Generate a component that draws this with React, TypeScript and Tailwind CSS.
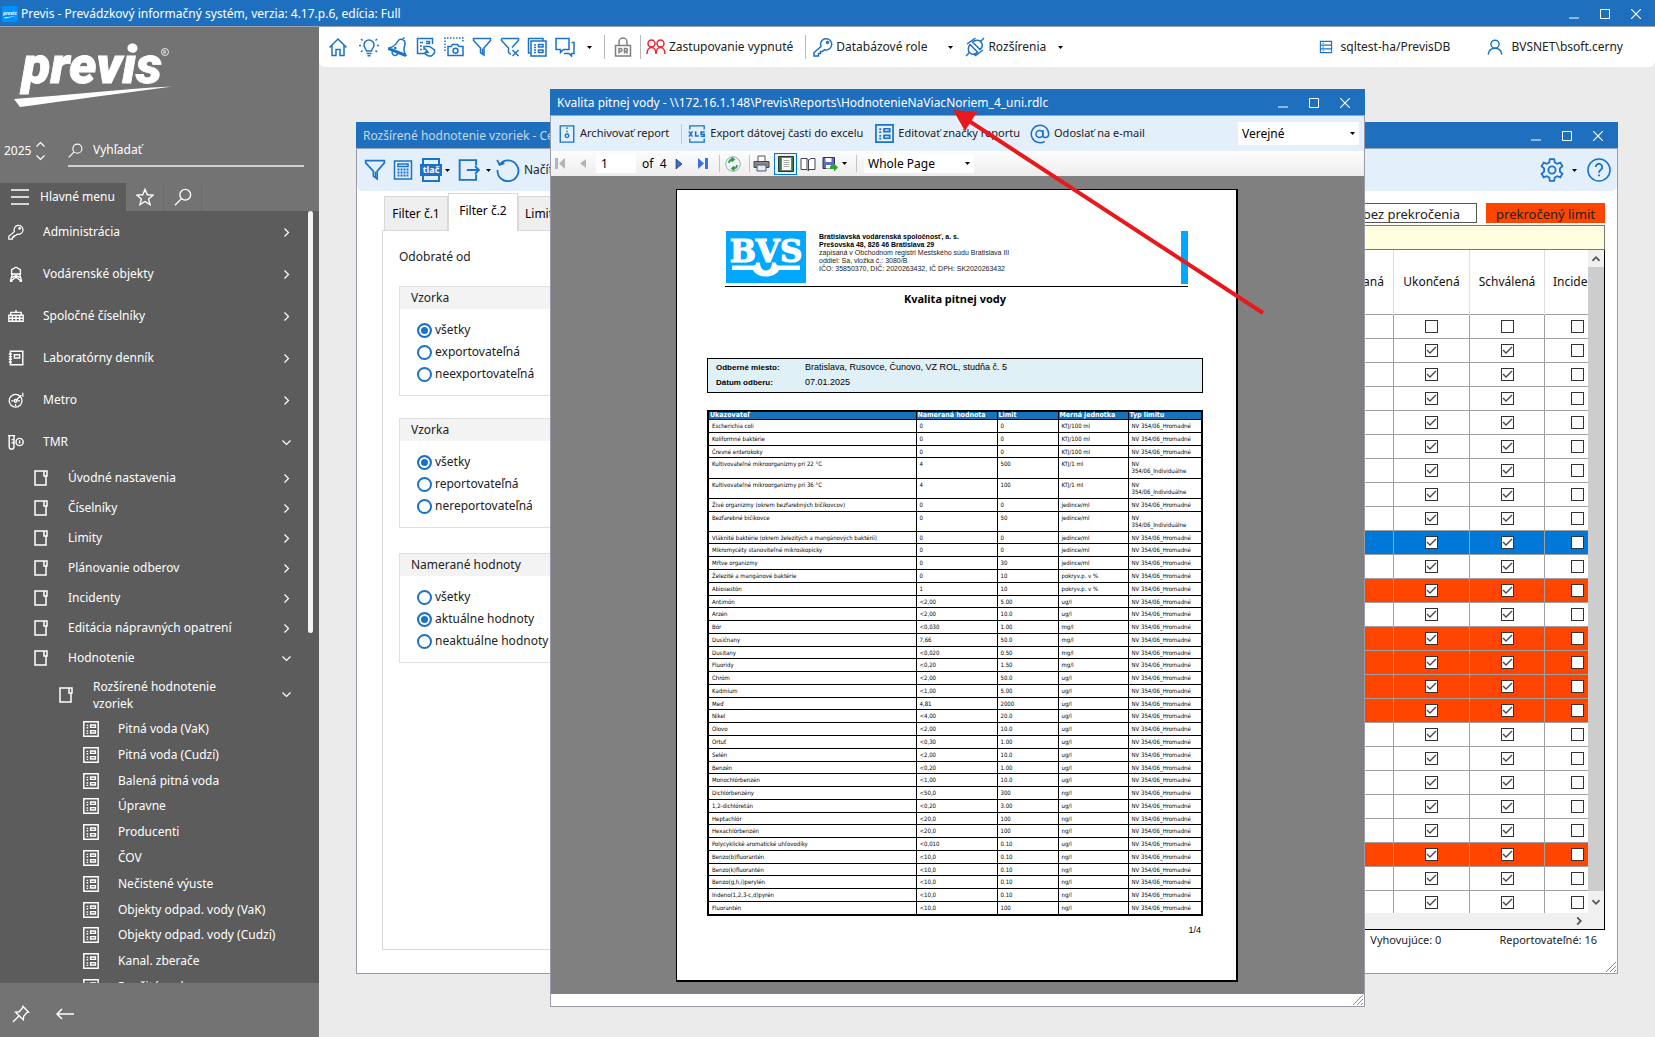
import { useState } from "react";
import type { ReactNode } from "react";

type IconProps = { className?: string };

function Icon({ className = "size-5", box = 20, width = 1.5, children }: IconProps & { box?: number; width?: number; children: ReactNode }) {
  return (
    <svg className={`shrink-0 ${className}`} viewBox={`0 0 ${box} ${box}`} fill="none" stroke="currentColor" strokeWidth={width} aria-hidden="true">
      {children}
    </svg>
  );
}

/* ---------- icons ---------- */

const HomeIcon = ({ className }: IconProps) => (
  <Icon className={className}>
    <path d="M1.500 10.500 10 2l8.500 8.500M4 8.500V18.500h4v-6h4v6h4V8.500" />
  </Icon>
);

const BulbIcon = ({ className }: IconProps) => (
  <Icon className={className}>
    <path d="M7.500 14c0-2-2.500-3-2.500-6a5 5 0 0 1 10 0c0 3-2.500 4-2.500 6zM7.500 16.500h5M8.500 18.800h3" />
    <path d="M0 8.500h2M18 8.500h2M2 2l1.500 1.500M18 2l-1.500 1.500M2 15l1.500-1.500M18 15l-1.500-1.500" />
  </Icon>
);

const BellIcon = ({ className }: IconProps) => (
  <Icon className={className}>
    <path d="M1 11c5-1 7-3.500 9-7 1.500-2.500 5-2.500 6.500 0 1.500 2.800-.5 5.500-.5 8.500 0 2 .5 3.500 1.500 5zM14.500 2.500 16.500.500M1 11l-.3 1.500L17 19l.5-1.500" />
    <path d="M4.500 14a3 3 0 1 0 5.500 2.300" />
    <circle cx="7.300" cy="11" r="0.600" />
  </Icon>
);

const FormHandIcon = ({ className }: IconProps) => (
  <Icon className={className}>
    <path d="M8 16.500H1.500V1.500h15V7M4 5.500h3M4 9h2M4 12.500h2M10 4.500h3.500v2H10" />
    <path d="M8 9.500h5.500l5 3.500v3l-3 3h-3l-4-2.500 1-1.500 2.500.5-2.500-3.500H8z" />
  </Icon>
);

const CameraIcon = ({ className }: IconProps) => (
  <Icon className={className}>
    <path d="M1 14V1h18v5" strokeDasharray="1.500 1.500" />
    <path d="M4 9.500h3l1.500-2h5l1.500 2h4v9H4z" />
    <circle cx="11.500" cy="13.800" r="2.500" />
  </Icon>
);

const FunnelIcon = ({ className }: IconProps) => (
  <Icon className={className}>
    <path d="M1.500 1.500h17v2L12 11v7l-3.500-2.500V11L1.500 3.500z" />
    <path d="M10.500 11.500v5" />
  </Icon>
);

const FunnelClearIcon = ({ className }: IconProps) => (
  <Icon className={className}>
    <path d="M1.500 1.500h17v2L12 10.500M11 17.500l-2.500-2V11L1.500 3.500v-2M12.500 13l6 6M18.500 13l-6 6" />
  </Icon>
);

const FormIcon = ({ className }: IconProps) => (
  <Icon className={className} width={1.800}>
    <path d="M1 1h18v18H1zM9.500 5h6v3h-6zM9.500 12h6v3h-6zM4.500 5.500h2M4.500 8.500h2M4.500 12.500h2M4.500 15.500h2" />
  </Icon>
);

const FormsIcon = ({ className }: IconProps) => (
  <Icon className={className}>
    <path d="M4 16H1.500V1.500H16V4" />
    <path d="M4 4h15v15H4zM11.500 7.500h4.500v2.500h-4.500zM11.500 13h4.500v2.500h-4.500zM7 8h2M7 10.500h2M7 13h2M7 15.500h2" />
  </Icon>
);

const ChatIcon = ({ className }: IconProps) => (
  <Icon className={className}>
    <path d="M4 12.500H1v-11h13v11H8.500l-3 3v-3zM16.500 5.500H19v11h-2.500v2.500l-2.500-2.500H9" />
  </Icon>
);

const LockIcon = ({ className }: IconProps) => (
  <Icon className={className}>
    <path d="M6 8V5a4 4 0 0 1 8 0v3M2.500 8.500h15v10.500h-15z" />
    <path d="M6 16.500v-5h1.500a1.500 1.500 0 0 1 0 3H6M11.500 16.500v-5H13a1.500 1.500 0 0 1 0 3h-1.500M13 14.500l1.500 2" />
  </Icon>
);

const PeopleIcon = ({ className }: IconProps) => (
  <Icon className={className}>
    <circle cx="5.500" cy="6.500" r="3.500" />
    <circle cx="14.500" cy="6.500" r="3.500" />
    <path d="M1 17c0-4 2-6.500 4.500-6.500S10 13 10 17c0-4 2-6.500 4.500-6.500S19 13 19 17" />
  </Icon>
);

const KeyIcon = ({ className }: IconProps) => (
  <Icon className={className}>
    <path d="M8 9.500a5.600 5.600 0 1 1 3.500 3.200L9.500 14.500H7.500v2H5.500v2.500H1v-3.500z" />
    <circle cx="14.500" cy="5.500" r="1" />
  </Icon>
);

const PlugIcon = ({ className }: IconProps) => (
  <Icon className={className}>
    <path d="M5 7.500 12.500 15c-2 2.500-5 3-7.500 1S3 10 5 7.500zM7.500 5 15 12.500c2.500-2 3-5 1-7.500S10 3 7.500 5zM15.500 4.500 19 1M4.500 15.500 1 19M10.500 1 2 7M18 13l-8 6" />
  </Icon>
);

const DatabaseIcon = ({ className }: IconProps) => (
  <Icon className={className} width={1.600}>
    <path d="M2 2h16v5.300H2zM2 7.300h16v5.400H2zM2 12.700h16V18H2zM5 4.700h2M5 10h2M5 15.300h2" />
  </Icon>
);

const UserIcon = ({ className }: IconProps) => (
  <Icon className={className} width={1.800}>
    <circle cx="10" cy="6.500" r="5" />
    <path d="M1.500 19.500c.5-5 4-8 8.500-8s8 3 8.500 8" />
  </Icon>
);

const SearchIcon = ({ className }: IconProps) => (
  <Icon className={className}>
    <circle cx="12.500" cy="7.500" r="6" />
    <path d="m8.300 11.800-7.300 7.300" />
  </Icon>
);

const TowerIcon = ({ className }: IconProps) => (
  <Icon className={className} width={1.700}>
    <path d="M4.500 4.500 10 1.500l5.500 3V10h-11zM5.500 10 3 19M14.500 10 17 19M4.500 14.500 10 12l5.500 2.500M4 18.500l6-4.500 6 4.500M2.500 19h3M14.500 19h3" />
  </Icon>
);

const BankIcon = ({ className }: IconProps) => (
  <Icon className={className} width={1.700}>
    <path d="M1 9h18v7.500H1zM3.500 9V5.500h13V9M10 5V2.500M5.500 9v7.500M10 9v7.500M14.500 9v7.500M1 12.800h18" />
  </Icon>
);

const DiaryIcon = ({ className }: IconProps) => (
  <Icon className={className} width={1.800}>
    <path d="M3 1.500h15.500v17H3zM8 6h6.500v4H8zM1 5h4M1 8.300h4M1 11.600h4M1 15h4" />
  </Icon>
);

const GaugeIcon = ({ className }: IconProps) => (
  <Icon className={className} width={1.600}>
    <circle cx="9.500" cy="11" r="8" />
    <path d="M4 11h3M12 11h3M9.500 15v2.500M9.500 11l7-7M18.500 1v5" />
    <circle cx="9.500" cy="11" r="1.800" />
  </Icon>
);

const TubeIcon = ({ className }: IconProps) => (
  <Icon className={className} width={1.800}>
    <path d="M0 2h9M1.500 2v14a3 3 0 0 0 6 0V2M4.500 7H7M4.500 11H7" />
    <circle cx="14.500" cy="10" r="4.500" />
    <path d="M14.500 8v4" />
  </Icon>
);

const FolderIcon = ({ className }: IconProps) => (
  <svg className={`shrink-0 ${className}`} viewBox="0 0 14 16" fill="none" stroke="currentColor" strokeWidth="1.500" aria-hidden="true">
    <path d="M10 1H1v14h11V6M10 1h3v5h-3z" />
  </svg>
);

const CalcIcon = ({ className }: IconProps) => (
  <Icon className={className}>
    <path d="M1.500 1h17v18h-17zM5 4h10v2.500H5z" />
    <path d="M4.500 9.500h11M4.500 12.500h11M4.500 15.500h11" strokeWidth="2" strokeDasharray="2 1" />
  </Icon>
);

const ExportIcon = ({ className }: IconProps) => (
  <Icon className={className} width={1.700}>
    <path d="M16.500 6V1H1.500v18h15v-5M8 10h11M15.500 6.500 19 10l-3.500 3.500" />
  </Icon>
);

const RefreshIcon = ({ className }: IconProps) => (
  <Icon className={className}>
    <path d="M3.200 5.200A8.700 8.700 0 1 1 1.300 10M1 1.500l2 4.300 4-1.500" />
  </Icon>
);

const GearIcon = ({ className }: IconProps) => (
  <Icon className={className}>
    <path d="M8.200 1h3.600l.5 2.700 2 1.100 2.600-1 1.800 3.100-2.100 1.800v2.600l2.100 1.800-1.800 3.100-2.600-1-2 1.100-.5 2.700H8.200l-.5-2.700-2-1.100-2.600 1-1.800-3.100 2.100-1.800V8.700L1.300 6.900l1.800-3.100 2.600 1 2-1.100z" />
    <circle cx="10" cy="10" r="3" />
  </Icon>
);

const HelpIcon = ({ className }: IconProps) => (
  <Icon className={className} width={1.300}>
    <circle cx="10" cy="10" r="9.200" />
    <path d="M7.300 7.500a2.700 2.700 0 1 1 4.200 2.300c-1 .7-1.500 1.200-1.500 2.400M10 13.700v1.600" strokeWidth="1.600" />
  </Icon>
);

const ArchiveIcon = ({ className }: IconProps) => (
  <Icon className={className}>
    <path d="M2.500 1h15v18h-15zM10 2.500v2M10 6v2" />
    <circle cx="10" cy="12" r="2" />
  </Icon>
);

const XlsIcon = ({ className }: IconProps) => (
  <Icon className={className}>
    <path d="M2 5V1h16v4M2 15v4h16v-4" />
    <path d="m1 7 4 6M5 7l-4 6M8.500 7v5.300h3.500M18.500 7.700h-4v2.500h3.500v2.300h-4" strokeWidth="1.700" />
  </Icon>
);

const AtIcon = ({ className }: IconProps) => (
  <Icon className={className}>
    <circle cx="9.500" cy="10" r="3.500" />
    <path d="M13 6v5.500c0 3 5.700 3 5.700-1.500a8.700 8.700 0 1 0-4 7.300" />
  </Icon>
);

const PinIcon = ({ className }: IconProps) => (
  <Icon className={className}>
    <path d="m12 1.500 6.500 6.500-2 .5-3.500 4-.5 4L4 8l4-.5 3.500-4zM8 12l-7 7" />
  </Icon>
);

const ChevronIcon = ({ className }: IconProps) => (
  <svg className={`shrink-0 ${className}`} viewBox="0 0 9 9" fill="none" stroke="currentColor" strokeWidth="1.200" aria-hidden="true">
    <path d="m2.500.5 4 4-4 4" />
  </svg>
);

const Caret = () => (
  <svg className="w-[5px] h-[3px] shrink-0 text-black" viewBox="0 0 5 3" aria-hidden="true">
    <path d="M0 0h5L2.500 3z" fill="currentColor" />
  </svg>
);

const Grip = () => (
  <svg className="size-3 shrink-0" viewBox="0 0 12 12" stroke="#8a8a8a" aria-hidden="true">
    <path d="M1 11 11 1M5 11l6-6M9 11l2-2" />
  </svg>
);

function PrintLabelIcon() {
  return (
    <svg className="w-[22px] h-6 shrink-0" viewBox="0 0 22 24" aria-hidden="true">
      <path d="M3 6V1h16v5M3 18v5h16v-5" fill="none" stroke="#1a73c9" strokeWidth="2" />
      <path d="M0 6h22v12H0z" fill="#1a73c9" />
      <text x="11" y="15" textAnchor="middle" fontSize="9" fontWeight="700" fill="#fff" fontFamily="Noto Sans, sans-serif">tlač</text>
    </svg>
  );
}

/* ---------- sidebar ---------- */

type MenuItem = { label: string; icon: (p: IconProps) => ReactNode; open?: boolean };

const mainItems: MenuItem[] = [
  { label: "Administrácia", icon: KeyIcon },
  { label: "Vodárenské objekty", icon: TowerIcon },
  { label: "Spoločné číselníky", icon: BankIcon },
  { label: "Laboratórny denník", icon: DiaryIcon },
  { label: "Metro", icon: GaugeIcon },
  { label: "TMR", icon: TubeIcon, open: true },
];

const tmrItems = [
  "Úvodné nastavenia",
  "Číselníky",
  "Limity",
  "Plánovanie odberov",
  "Incidenty",
  "Editácia nápravných opatrení",
  "Hodnotenie",
];

const forms = [
  "Pitná voda (VaK)",
  "Pitná voda (Cudzí)",
  "Balená pitná voda",
  "Úpravne",
  "Producenti",
  "ČOV",
  "Nečistené výuste",
  "Objekty odpad. vody (VaK)",
  "Objekty odpad. vody (Cudzí)",
  "Kanal. zberače",
  "Použité vody",
];

function Logo() {
  return (
    <svg className="block w-[172px] h-[84px]" viewBox="0 0 172 84" role="img" aria-label="previs">
      <text x="22" y="56" fontSize="52" fontWeight="900" fontStyle="italic" fill="#fff" stroke="#fff" strokeWidth="0.800" fontFamily="Roboto, sans-serif">previs</text>
      <circle cx="165" cy="25" r="3.500" fill="none" stroke="#fff" strokeWidth="0.800" />
      <text x="163" y="27" fontSize="5" fill="#fff" fontFamily="Roboto, sans-serif">R</text>
      <path d="M14 72c50-3.500 105-10 158-12.500C125 66 70 73 20 80z" fill="#fff" />
    </svg>
  );
}

function Sidebar() {
  return (
    <aside className="w-[319px] shrink-0 flex flex-col bg-[#737373] text-white">
      <Logo />
      <div className="mt-6 h-8 flex items-center pl-1">
        <span className="w-8">2025</span>
        <div className="flex flex-col gap-1 w-8">
          <button aria-label="Ďalší rok"><ChevronIcon className="size-[9px] -rotate-90" /></button>
          <button aria-label="Predchádzajúci rok"><ChevronIcon className="size-[9px] rotate-90" /></button>
        </div>
        <label className="flex items-center flex-1 mr-[15px] h-8 border-b-2 border-[#d0d0d0]">
          <SearchIcon className="size-[15px]" />
          <input aria-label="Vyhľadať" placeholder="Vyhľadať" className="ml-[10px] w-full bg-transparent outline-none placeholder:text-white" />
        </label>
      </div>
      <div className="mt-4 h-7 flex shrink-0">
        <button className="flex items-center gap-[11px] w-[126px] pl-[11px] bg-[#5c5c5c]">
          <svg className="w-[18px] h-4" viewBox="0 0 18 16" stroke="#fff" strokeWidth="1.500" aria-hidden="true"><path d="M0 1h18M0 8h18M0 15h18" /></svg>
          Hlavné menu
        </button>
        <button aria-label="Obľúbené" className="w-[38px] flex items-center justify-center border-r border-[#6b6b6b]">
          <Icon className="size-[18px]"><path d="m10 1.500 2.500 6 6.500.5-5 4.200 1.600 6.300L10 15l-5.600 3.500L6 12.200 1 8l6.500-.5z" /></Icon>
        </button>
        <button aria-label="Hľadať" className="w-[38px] flex items-center justify-center border-r border-[#6b6b6b]">
          <SearchIcon className="size-[18px]" />
        </button>
      </div>
      <nav className="flex-1 min-h-0 overflow-hidden bg-[#5c5c5c] flex">
        <ul className="flex-1">
          {mainItems.map(({ label, icon: Glyph, open }) => (
            <li key={label}>
              <button className="w-full h-[42px] flex items-center pl-2 pr-[17px] text-left">
                <Glyph className="size-4" />
                <span className="flex-1 ml-[19px]">{label}</span>
                <ChevronIcon className={open ? "size-[9px] rotate-90" : "size-[9px]"} />
              </button>
            </li>
          ))}
          {tmrItems.map((label) => (
            <li key={label}>
              <button className="w-full h-[30px] flex items-center pl-[34px] pr-[17px] text-left">
                <FolderIcon className="w-[14px] h-4" />
                <span className="flex-1 ml-5">{label}</span>
                <ChevronIcon className={label === "Hodnotenie" ? "size-[9px] rotate-90" : "size-[9px]"} />
              </button>
            </li>
          ))}
          <li>
            <button className="w-full h-[43px] flex items-center pl-[59px] pr-[17px] text-left leading-[17px]">
              <FolderIcon className="w-[14px] h-4" />
              <span className="w-[150px] ml-5">Rozšírené hodnotenie vzoriek</span>
              <ChevronIcon className="ml-auto size-[9px] rotate-90" />
            </button>
            <ul className="h-[284px] flex flex-col">
              {forms.map((label) => (
                <li key={label} className="flex-1 flex">
                  <button className="w-full flex items-center pl-[83px] text-left">
                    <FormIcon className="size-4" />
                    <span className="ml-[19px]">{label}</span>
                  </button>
                </li>
              ))}
            </ul>
          </li>
        </ul>
        <div className="w-[5px] h-[422px] mr-[6px] rounded-full bg-[#f4f4f4]" />
      </nav>
      <div className="h-[54px] shrink-0 flex items-center gap-[26px] pl-3 pt-2">
        <button aria-label="Pripnúť"><PinIcon className="size-[18px]" /></button>
        <button aria-label="Späť">
          <svg className="w-[18px] h-3" viewBox="0 0 18 12" fill="none" stroke="#fff" strokeWidth="1.500" aria-hidden="true"><path d="M18 6H1M6 1 1 6l5 5" /></svg>
        </button>
      </div>
    </aside>
  );
}

/* ---------- shared window parts ---------- */

function WindowControls() {
  return (
    <div className="ml-auto flex items-center text-white">
      <button aria-label="Minimalizovať" className="w-[31px] h-6 flex justify-center items-center">
        <Icon className="size-[10px]" box={10} width={1}><path d="M0 9h10" /></Icon>
      </button>
      <button aria-label="Maximalizovať" className="w-[31px] h-6 flex justify-center items-center">
        <Icon className="size-[10px]" box={10} width={1}><path d="M.5.5h9v9h-9z" /></Icon>
      </button>
      <button aria-label="Zavrieť" className="w-[31px] h-6 flex justify-center items-center">
        <Icon className="size-[10px]" box={10} width={1.200}><path d="m0 0 10 10M10 0 0 10" /></Icon>
      </button>
    </div>
  );
}

const Separator = () => <div className="w-px h-6 bg-[#b8b8b8] shrink-0" />;

function MainToolbar() {
  return (
    <header className="h-10 shrink-0 bg-white rounded-b-md flex items-center pl-[3px] pr-8 text-[#1a73c9]">
      <button aria-label="Domov" className="w-[31px] flex justify-center"><HomeIcon /></button>
      <button aria-label="Tipy" className="w-[31px] flex justify-center"><BulbIcon /></button>
      <button aria-label="Upozornenia" className="w-7 flex justify-center"><BellIcon /></button>
      <button aria-label="Formulár" className="w-7 flex justify-center"><FormHandIcon /></button>
      <button aria-label="Snímka" className="w-7 flex justify-center"><CameraIcon /></button>
      <button aria-label="Filter" className="w-7 flex justify-center"><FunnelIcon /></button>
      <button aria-label="Zrušiť filter" className="w-7 flex justify-center"><FunnelClearIcon /></button>
      <button aria-label="Okná" className="w-[26px] flex justify-center"><FormsIcon /></button>
      <button aria-label="Správy" className="flex items-center pl-[5px] gap-3"><ChatIcon /><Caret /></button>
      <div className="ml-3"><Separator /></div>
      <button aria-label="Zámok" className="w-[35px] flex justify-center text-[#808080]"><LockIcon /></button>
      <Separator />
      <button className="flex items-center gap-[3px] ml-[5px] text-[#222]">
        <PeopleIcon className="size-5 text-[#e8262d]" />
        Zastupovanie vypnuté
      </button>
      <div className="ml-3 mr-[7px]"><Separator /></div>
      <button className="flex items-center gap-[3px] text-[#222]">
        <KeyIcon className="size-5 text-[#1a73c9]" />
        Databázové role
        <span className="ml-[18px]"><Caret /></span>
      </button>
      <button className="flex items-center gap-[3px] ml-3 text-[#222]">
        <PlugIcon className="size-5 text-[#1a73c9]" />
        Rozšírenia
        <span className="ml-[9px]"><Caret /></span>
      </button>
      <div className="ml-auto flex items-center gap-[37px] text-[#222]">
        <span className="flex items-center gap-2"><DatabaseIcon className="size-[14px] text-[#1a73c9]" />sqltest-ha/PrevisDB</span>
        <span className="flex items-center gap-2"><UserIcon className="size-4 text-[#1a73c9]" />BVSNET\bsoft.cerny</span>
      </div>
    </header>
  );
}

/* ---------- sample evaluation window ---------- */

function RadioGroup({ title, name, options, initial }: { title: string; name: string; options: string[]; initial: string }) {
  const [value, setValue] = useState(initial);
  return (
    <fieldset className="h-[110px] border border-[#e0e0e0]">
      <div className="h-[22px] bg-[#f3f3f3] pl-[11px] leading-[22px]">{title}</div>
      <div className="pt-[10px] pl-[17px]">
        {options.map((option) => (
          <label key={option} className="h-[22px] flex items-center gap-[3px] whitespace-nowrap">
            <input
              type="radio"
              name={name}
              checked={value === option}
              onChange={() => setValue(option)}
              className="appearance-none size-[15px] shrink-0 rounded-full border-2 border-[#1a73c9] bg-white checked:bg-[#1a73c9] checked:shadow-[inset_0_0_0_2px_#fff]"
            />
            {option}
          </label>
        ))}
      </div>
    </fieldset>
  );
}

type RowState = "plain" | "selected" | "over";

const gridRows: RowState[] = [
  "plain", "plain", "plain", "plain", "plain", "plain", "plain", "plain", "plain",
  "selected", "plain", "over", "plain", "over", "over", "over", "over",
  "plain", "plain", "plain", "plain", "plain", "over", "plain", "plain",
];

const rowColors: Record<RowState, string> = {
  plain: "bg-white",
  selected: "bg-[#0078d7]",
  over: "bg-[#ff4500]",
};

function CheckBox({ label, checked }: { label: string; checked: boolean }) {
  return (
    <span className="grid size-[13px] mx-auto">
      <input type="checkbox" aria-label={label} defaultChecked={checked} className="peer col-start-1 row-start-1 appearance-none size-[13px] border border-[#333] bg-white" />
      <svg className="col-start-1 row-start-1 size-[13px] pointer-events-none invisible peer-checked:visible" viewBox="0 0 13 13" fill="none" stroke="#444" strokeWidth="1.300" aria-hidden="true">
        <path d="m2 6 3 3 6-6" />
      </svg>
    </span>
  );
}

function SamplesGrid() {
  return (
    <div className="flex-1 min-w-0 flex flex-col pl-5">
      <div className="h-5 flex justify-end gap-[9px] text-[13px] leading-5 text-[#222]">
        <div className="w-[130px] border border-[#555] pr-4 text-right">bez prekročenia</div>
        <div className="w-[119px] bg-[#ff4500] text-center pt-px">prekročený limit</div>
      </div>
      <div className="mt-[2px] h-[25px] border border-[#777] bg-[#ffffe0] shrink-0" />
      <div className="h-[680px] border-r border-b border-black flex flex-col">
        <div className="flex-1 min-h-0 flex">
          <div className="flex-1 min-w-0 overflow-hidden flex justify-end">
            <table className="table-fixed w-[292px] -mr-[22px] border-collapse self-start shrink-0">
              <colgroup>
                <col className="w-[76px]" />
                <col className="w-[76px]" />
                <col className="w-[75px]" />
                <col className="w-[65px]" />
              </colgroup>
              <thead>
                <tr className="h-16 text-[#111]">
                  {["Evidovaná", "Ukončená", "Schválená"].map((h) => (
                    <th key={h} className="font-normal border-r border-[#ddd] p-0">{h}</th>
                  ))}
                  <th className="font-normal p-0 pl-2 text-left whitespace-nowrap">Incidentná</th>
                </tr>
              </thead>
              <tbody>
                {gridRows.map((state, i) => (
                  <tr key={i} className={`h-6 ${rowColors[state]}`}>
                    <td className="border border-[#a0a0a0] p-0"><CheckBox label="Evidovaná" checked={i > 0} /></td>
                    <td className="border border-[#a0a0a0] p-0"><CheckBox label="Ukončená" checked={i > 0} /></td>
                    <td className="border border-[#a0a0a0] p-0"><CheckBox label="Schválená" checked={i > 0} /></td>
                    <td className="border border-[#a0a0a0] p-0"><CheckBox label="Incidentná" checked={false} /></td>
                  </tr>
                ))}
              </tbody>
            </table>
          </div>
          <div className="w-4 flex flex-col bg-[#f0f0f0] text-[#555]">
            <button aria-label="Hore" className="h-[17px] flex items-center justify-center"><ChevronIcon className="size-2 -rotate-90 stroke-2" /></button>
            <div className="flex-1 bg-[#cdcdcd]" />
            <button aria-label="Dole" className="h-[22px] flex items-center justify-center"><ChevronIcon className="size-2 rotate-90 stroke-2" /></button>
          </div>
        </div>
        <div className="h-4 bg-[#f0f0f0] flex items-center justify-end pr-[21px] text-[#555]">
          <button aria-label="Doprava"><ChevronIcon className="size-2 stroke-2" /></button>
        </div>
      </div>
      <div className="mt-[2px] flex justify-end gap-[58px] pr-2 text-[11px] text-[#222]">
        <span>Vyhovujúce: 0</span>
        <span>Reportovateľné: 16</span>
      </div>
    </div>
  );
}

function SamplesWindow() {
  return (
    <section className="absolute left-[37px] top-[55px] w-[1262px] h-[852px] bg-white border border-[#9a9aa8] border-t-0 flex flex-col text-[#222]">
      <div className="-mx-px h-[27px] shrink-0 bg-[#1e70bf] border-b border-[#9aa4b0] flex items-center pt-[2px] pl-[7px] pr-[5px] text-[#c9d6e4]">
        <h2>Rozšírené hodnotenie vzoriek - Centrálne</h2>
        <WindowControls />
      </div>
      <div className="h-[42px] shrink-0 bg-[#e3effb] rounded-b-md flex items-center pl-[7px] pr-[6px] text-[#1a73c9]">
        <button aria-label="Filter"><FunnelIcon className="size-[22px]" /></button>
        <button aria-label="Kalkulačka" className="ml-[7px]"><CalcIcon className="size-[20px]" /></button>
        <button aria-label="Tlač" className="ml-[7px] flex items-center gap-[3px]"><PrintLabelIcon /><Caret /></button>
        <button aria-label="Export" className="ml-2 flex items-center gap-[6px]"><ExportIcon className="size-[22px]" /><Caret /></button>
        <button className="ml-[5px] flex items-center gap-1 text-[#222]"><RefreshIcon className="size-[24px] text-[#1a73c9]" />Načítať</button>
        <button aria-label="Nastavenia" className="ml-auto flex items-center gap-[8px]"><GearIcon className="size-6" /><Caret /></button>
        <button aria-label="Pomocník" className="ml-[10px]"><HelpIcon className="size-6" /></button>
      </div>
      <div className="flex-1 min-h-0 flex pl-[25px] pr-3">
        <div className="w-[380px] shrink-0 flex flex-col pt-[3px]">
          <div role="tablist" className="h-9 flex items-end pl-[2px] text-black">
            <button role="tab" className="h-[34px] w-16 bg-[#efefef] border border-b-0 border-[#d9d9d9]">Filter č.1</button>
            <button role="tab" aria-selected="true" className="relative z-10 -mb-px h-[38px] w-[70px] pb-1 bg-white border border-b-0 border-[#d9d9d9]">Filter č.2</button>
            <button role="tab" className="h-[34px] w-16 pl-[6px] text-left bg-[#efefef] border border-b-0 border-[#d9d9d9]">Limity</button>
          </div>
          <div className="h-[720px] border border-[#d9d9d9] pl-4 pt-4">
            <div className="h-[39px] leading-5">Odobraté od</div>
            <RadioGroup title="Vzorka" name="export" options={["všetky", "exportovateľná", "neexportovateľná"]} initial="všetky" />
            <div className="mt-[22px]">
              <RadioGroup title="Vzorka" name="report" options={["všetky", "reportovateľná", "nereportovateľná"]} initial="všetky" />
            </div>
            <div className="mt-[25px]">
              <RadioGroup title="Namerané hodnoty" name="values" options={["všetky", "aktuálne hodnoty", "neaktuálne hodnoty"]} initial="aktuálne hodnoty" />
            </div>
          </div>
        </div>
        <div className="flex-1 min-w-0 flex pt-3">
          <SamplesGrid />
        </div>
      </div>
      <div className="flex justify-end"><Grip /></div>
    </section>
  );
}

/* ---------- report window ---------- */

const COMMON = "NV 354/06_Hromadné";
const INDIVIDUAL = "NV\n354/06_Individuálne";

const results: [string, string, string, string, string][] = [
  ["Escherichia coli", "0", "0", "KTJ/100 ml", COMMON],
  ["Koliformné baktérie", "0", "0", "KTJ/100 ml", COMMON],
  ["Črevné enterokoky", "0", "0", "KTJ/100 ml", COMMON],
  ["Kultivovateľné mikroorganizmy pri 22 °C", "4", "500", "KTJ/1 ml", INDIVIDUAL],
  ["Kultivovateľné mikroorganizmy pri 36 °C", "4", "100", "KTJ/1 ml", INDIVIDUAL],
  ["Živé organizmy (okrem bezfarebných bičíkovcov)", "0", "0", "jedince/ml", COMMON],
  ["Bezfarebné bičíkovce", "0", "50", "jedince/ml", INDIVIDUAL],
  ["Vláknité baktérie (okrem železitých a mangánových baktérií)", "0", "0", "jedince/ml", COMMON],
  ["Mikromycéty stanoviteľné mikroskopicky", "0", "0", "jedince/ml", COMMON],
  ["Mŕtve organizmy", "0", "30", "jedince/ml", COMMON],
  ["Železité a mangánové baktérie", "0", "10", "pokryv.p. v %", COMMON],
  ["Abiosestón", "1", "10", "pokryv.p. v %", COMMON],
  ["Antimón", "<2,00", "5.00", "ug/l", COMMON],
  ["Arzén", "<2,00", "10.0", "ug/l", COMMON],
  ["Bór", "<0,030", "1.00", "mg/l", COMMON],
  ["Dusičnany", "7,66", "50.0", "mg/l", COMMON],
  ["Dusitany", "<0,020", "0.50", "mg/l", COMMON],
  ["Fluoridy", "<0,20", "1.50", "mg/l", COMMON],
  ["Chróm", "<2,00", "50.0", "ug/l", COMMON],
  ["Kadmium", "<1,00", "5.00", "ug/l", COMMON],
  ["Meď", "4,81", "2000", "ug/l", COMMON],
  ["Nikel", "<4,00", "20.0", "ug/l", COMMON],
  ["Olovo", "<2,00", "10.0", "ug/l", COMMON],
  ["Ortuť", "<0,30", "1.00", "ug/l", COMMON],
  ["Selén", "<2,00", "10.0", "ug/l", COMMON],
  ["Benzén", "<0,20", "1.00", "ug/l", COMMON],
  ["Monochlórbenzén", "<1,00", "10.0", "ug/l", COMMON],
  ["Dichlórbenzény", "<50,0", "300", "ng/l", COMMON],
  ["1,2-dichlóretán", "<0,20", "3.00", "ug/l", COMMON],
  ["Heptachlór", "<20,0", "100", "ng/l", COMMON],
  ["Hexachlórbenzén", "<20,0", "100", "ng/l", COMMON],
  ["Polycyklické aromatické uhľovodíky", "<0,010", "0.10", "ug/l", COMMON],
  ["Benzo(b)fluorantén", "<10,0", "0.10", "ng/l", COMMON],
  ["Benzo(k)fluorantén", "<10,0", "0.10", "ng/l", COMMON],
  ["Benzo(g,h,i)perylén", "<10,0", "0.10", "ng/l", COMMON],
  ["Indeno(1,2,3-c,d)pyrén", "<10,0", "0.10", "ng/l", COMMON],
  ["Fluorantén", "<10,0", "100", "ng/l", COMMON],
];

function BvsLogo() {
  return (
    <svg className="w-20 h-[52px] shrink-0" viewBox="0 0 80 52" role="img" aria-label="BVS">
      <path d="M0 0h80v52H0z" fill="#00a8ff" />
      <text x="40" y="31" textAnchor="middle" fontSize="31" fontWeight="700" fill="#fff" stroke="#fff" strokeWidth="1.200" fontFamily="DejaVu Serif, serif">BVS</text>
      <path d="M6 34.500h21c2 0 3-1 3-3h4c0 5 2.500 8 6 8s6-3 6-8h4c0 2 1 3 3 3h21v4.500H53c-2 4-6.500 6.500-13 6.500S29 43 27 39H6z" fill="#fff" />
    </svg>
  );
}

function ReportPage() {
  return (
    <article className="mt-[13px] ml-[125px] w-[562px] h-[793px] shrink-0 bg-white border border-r-2 border-b-2 border-black pl-[30px] pr-[33px] pt-[41px] text-black font-['Liberation_Sans',sans-serif]">
      <div className="ml-[18px] mr-[15px] pl-px flex border-b border-black h-14">
        <BvsLogo />
        <div className="ml-[13px] pt-[2px] text-[7px] leading-[8px] text-[#222]">
          <p className="font-bold text-black">Bratislavská vodárenská spoločnosť, a. s.</p>
          <p className="font-bold text-black">Prešovská 48, 826 46 Bratislava 29</p>
          <p>zapísaná v Obchodnom registri Mestského súdu Bratislava III</p>
          <p>oddiel: Sa, vložka č.: 3080/B</p>
          <p>IČO: 35850370, DIČ: 2020263432, IČ DPH: SK2020263432</p>
        </div>
        <div className="ml-auto w-[7px] h-[53px] bg-[#00a8ff]" />
      </div>
      <h1 className="mt-[3px] h-[18px] text-center text-[11px] leading-[18px] font-bold font-['Noto_Sans',sans-serif]">Kvalita pitnej vody</h1>
      <dl className="mt-[50px] h-[35px] border border-black bg-[#e0f0f7] pl-2 pt-px grid grid-cols-[89px_1fr] content-start text-[9px] leading-[15px]">
        <dt className="font-bold text-[8px]">Odberné miesto:</dt>
        <dd>Bratislava, Rusovce, Čunovo, VZ ROL, studňa č. 5</dd>
        <dt className="font-bold text-[8px]">Dátum odberu:</dt>
        <dd>07.01.2025</dd>
      </dl>
      <table className="mt-[17px] w-full h-[506px] table-fixed border-collapse border-2 border-black text-[6px] leading-[7px] font-['DejaVu_Sans_Condensed','DejaVu_Sans',sans-serif]">
        <colgroup>
          <col className="w-[208px]" />
          <col className="w-[81px]" />
          <col className="w-[61px]" />
          <col className="w-[70px]" />
          <col />
        </colgroup>
        <thead>
          <tr className="bg-[#1673b8] text-white text-left text-[7px]">
            {["Ukazovateľ", "Nameraná hodnota", "Limit", "Merná jednotka", "Typ limitu"].map((h) => (
              <th key={h} className="border border-black p-0 pl-px whitespace-nowrap">{h}</th>
            ))}
          </tr>
        </thead>
        <tbody>
          {results.map((row) => (
            <tr key={row[0]}>
              {row.map((cell, i) => (
                <td key={i} className="border border-black p-0 pl-[3px] pt-[2px] pb-[2px] align-top whitespace-pre-line">{cell}</td>
              ))}
            </tr>
          ))}
        </tbody>
      </table>
      <p className="mt-[9px] pr-[2px] text-right text-[9px] leading-[10px]">1/4</p>
    </article>
  );
}

function ReportWindow() {
  const [page, setPage] = useState("1");
  return (
    <section className="absolute left-[231px] top-[22px] w-[815px] h-[918px] bg-white border border-t-0 border-[#9a9aa8] flex flex-col text-[#222]">
      <div className="-mx-px h-[27px] shrink-0 bg-[#1e70bf] border-b border-[#9aa4b0] flex items-center pt-[2px] pl-[7px] pr-[5px] text-white">
        <h2 className="whitespace-nowrap">Kvalita pitnej vody - \\172.16.1.148\Previs\Reports\HodnotenieNaViacNoriem_4_uni.rdlc</h2>
        <WindowControls />
      </div>
      <div className="h-[35px] shrink-0 bg-[#e3effb] flex items-center pl-[7px] pr-[5px] whitespace-nowrap text-[11px]">
        <button className="flex items-center gap-1"><ArchiveIcon className="size-[18px] text-[#1a73c9]" />Archivovať report</button>
        <div className="ml-3 mr-[6px] w-px h-5 bg-[#c0c8d0]" />
        <button className="flex items-center gap-1"><XlsIcon className="size-[18px] text-[#1a73c9]" />Export dátovej časti do excelu</button>
        <button className="ml-3 flex items-center gap-1"><FormIcon className="size-[19px] text-[#1a73c9]" />Editovať značky reportu</button>
        <button className="ml-[10px] flex items-center gap-1"><AtIcon className="size-5 text-[#1a73c9]" />Odoslať na e-mail</button>
        <div className="ml-auto grid items-center w-[121px] h-[23px] bg-white text-[12px]">
          <select aria-label="Prístup" className="col-start-1 row-start-1 appearance-none w-full h-full pl-1 bg-transparent text-black">
            <option>Verejné</option>
          </select>
          <span className="col-start-1 row-start-1 justify-self-end pr-1 pointer-events-none"><Caret /></span>
        </div>
      </div>
      <div className="h-[25px] shrink-0 bg-gradient-to-b from-[#fdfdfd] to-[#ededed] flex items-center pl-1 text-black">
        <button aria-label="Prvá strana" className="w-[14px]"><Icon className="size-[11px]" box={11} width={0}><path d="M0 0h3v11H0zM10 0v11L4 5.500z" fill="#b4b4b4" /></Icon></button>
        <button aria-label="Predchádzajúca strana" className="ml-[10px] w-[17px]"><Icon className="size-[9px]" box={9} width={0}><path d="M7 0v9L1 4.500z" fill="#b4b4b4" /></Icon></button>
        <input aria-label="Strana" value={page} onChange={(e) => setPage(e.target.value)} className="w-10 h-[19px] pl-[5px] bg-white outline-none" />
        <span className="ml-[6px] w-[29px] whitespace-pre">of  4</span>
        <button aria-label="Ďalšia strana" className="ml-1 w-[22px]"><Icon className="size-[10px]" box={10} width={0.500}><path d="M1 0v10l6-5z" fill="#3a6fe0" /></Icon></button>
        <button aria-label="Posledná strana" className="w-[11px]"><Icon className="size-[11px]" box={11} width={0}><path d="M8 0h3v11H8zM1 0v11l6-5.500z" fill="#3a6fe0" /></Icon></button>
        <div className="ml-[11px] mr-[5px] w-px h-[17px] bg-[#c4c4c4]" />
        <button aria-label="Obnoviť">
          <Icon className="size-4" box={16} width={1.800}>
            <circle cx="8" cy="8" r="7.300" stroke="#9ab" strokeWidth="1" fill="#eef5fb" />
            <path d="M4 7c0-2 1.500-3.500 4-3.500M6.500 1.500 9 3.500 6.500 5.500M12 9c0 2-1.500 3.500-4 3.500M9.500 14.500 7 12.500l2.500-2" stroke="#3aa03a" />
          </Icon>
        </button>
        <div className="ml-2 mr-[3px] w-px h-[17px] bg-[#c4c4c4]" />
        <button aria-label="Tlačiť">
          <Icon className="size-[17px]" box={17} width={1}>
            <path d="M5 6V1h7v5" fill="#fff" stroke="#555" />
            <path d="M1 6.500h15v6H1z" fill="#888" stroke="#444" />
            <path d="M4 10h9v6H4z" fill="#dfeaff" stroke="#555" />
          </Icon>
        </button>
        <button aria-label="Rozloženie tlače" aria-pressed="true" className="ml-1 w-[23px] h-[22px] flex items-center justify-center border border-[#0078d7] bg-[#e5f1fb]">
          <Icon className="size-4" box={16} width={1}>
            <path d="M.5.5h15v15H.5z" fill="#2f7d46" stroke="#333" />
            <path d="M3.500 1.500h10v13h-10z" fill="#fff" stroke="#777" />
            <path d="M5.500 4.500h6M5.500 6.500h6M5.500 8.500h6M5.500 10.500h6" stroke="#aaa" />
          </Icon>
        </button>
        <button aria-label="Nastavenie strany" className="ml-[3px]">
          <Icon className="size-4" box={16} width={1}>
            <path d="M1 2.500h6v11H1zM7 13.500l1.500 1.500V4L7 2.500M8.500 13.500H15v-11h-4l-2.500 2z" fill="#fff" stroke="#445" />
          </Icon>
        </button>
        <button aria-label="Exportovať" className="ml-[6px] flex items-center gap-1">
          <Icon className="size-4" box={16} width={1}>
            <path d="M1 1.500h11.500v11H1z" fill="#5a6fc8" stroke="#334" />
            <path d="M3.500 2h6v4h-6zM4 9h5v3.500H4z" fill="#fff" stroke="none" />
            <path d="M8 10h4V7.500l4 4-4 4V13H8z" fill="#2fa32f" stroke="none" />
          </Icon>
          <Caret />
        </button>
        <div className="ml-[9px] mr-[7px] w-px h-[17px] bg-[#c4c4c4]" />
        <div className="grid items-center w-[110px] h-[19px] bg-white">
          <select aria-label="Priblíženie" className="col-start-1 row-start-1 appearance-none w-full h-full pl-1 bg-transparent">
            <option>Whole Page</option>
          </select>
          <span className="col-start-1 row-start-1 justify-self-end pr-1 pointer-events-none"><Caret /></span>
        </div>
      </div>
      <div className="flex-1 min-h-0 overflow-hidden bg-[#808080]">
        <ReportPage />
      </div>
      <div className="h-3 shrink-0 flex justify-end"><Grip /></div>
    </section>
  );
}

function Arrow() {
  return (
    <svg className="absolute left-[631px] top-[40px] w-[320px] h-[212px] pointer-events-none" viewBox="0 0 320 212" aria-hidden="true">
      <path d="M16 12 313 206" stroke="#e8191c" strokeWidth="4" />
      <path d="M3 3 27 5 15 24z" fill="#e8191c" />
    </svg>
  );
}

export default function App() {
  return (
    <div className="h-screen flex flex-col overflow-hidden bg-[#ebebeb] text-[12px] font-['Noto_Sans',sans-serif]">
      <div className="h-[27px] shrink-0 bg-[#1e70bf] border-b border-[#9aa4b0] flex items-center pt-[2px] pl-[2px] pr-1 text-white">
        <svg className="size-4 mr-[3px]" viewBox="0 0 16 16" aria-hidden="true">
          <rect width="16" height="16" rx="2" fill="#0090ff" />
          <text x="8" y="9" textAnchor="middle" fontSize="5" fontWeight="700" fontStyle="italic" fill="#fff" fontFamily="Roboto, sans-serif">previs</text>
          <path d="M2 11.500 14 10 3 12.500z" fill="#fff" />
        </svg>
        <span>Previs - Prevádzkový informačný systém, verzia: 4.17.p.6, edícia: Full</span>
        <WindowControls />
      </div>
      <div className="flex-1 min-h-0 flex">
        <Sidebar />
        <div className="flex-1 min-w-0 flex flex-col">
          <MainToolbar />
          <main className="relative flex-1 overflow-hidden">
            <SamplesWindow />
            <ReportWindow />
            <Arrow />
          </main>
        </div>
      </div>
    </div>
  );
}
